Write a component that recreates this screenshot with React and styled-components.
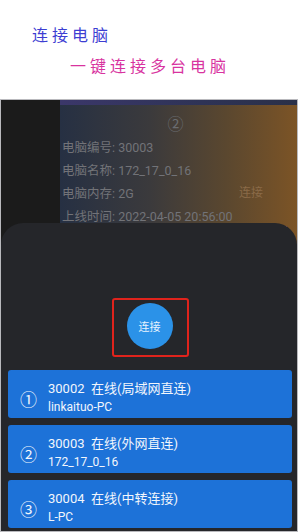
import React from "react";
import styled, { createGlobalStyle } from "styled-components";

const Global = createGlobalStyle`
  html, body { margin: 0; padding: 0; background: #ffffff; }
  body { font-family: Roboto, "Noto Sans CJK SC", sans-serif; }
  * { box-sizing: border-box; }
`;

const Page = styled.div`
  width: 300px;
  height: 532px;
  display: flex;
  flex-direction: column;
  overflow: hidden;
`;

const Header = styled.header`
  height: 99px;
  display: flex;
  flex-direction: column;
  padding-top: 23px;
`;

const Title = styled.div`
  font-family: "Noto Sans CJK SC", sans-serif;
  font-size: 16px;
  line-height: 22px;
  letter-spacing: 4px;
  color: ${(p) => p.$color};
  margin-left: ${(p) => p.$indent}px;
  margin-top: ${(p) => p.$top || 0}px;
`;

const Phone = styled.div`
  position: relative;
  width: 298px;
  height: 433px;
  border: 1px solid #b9b9bd;
  background: #1b1b1b;
  display: flex;
  overflow: hidden;
`;

const Sidebar = styled.div`
  width: 59px;
  background: #1b1b1b;
`;

const Card = styled.div`
  flex: 1;
  display: flex;
  flex-direction: column;
  background: linear-gradient(90deg, #263043 0%, #3b3a3c 38%, #5a472f 70%, #7c5426 100%);
`;

const Band = styled.div`
  height: 5px;
  background: linear-gradient(90deg, #3b376a 0%, #2e3356 60%, #2a3048 100%);
`;

const CardBody = styled.div`
  position: relative;
  padding: 7px 0 0 2px;
  color: #727378;
  font-size: 12.5px;
`;

const Circle = styled.div`
  font-family: "Noto Sans CJK SC", sans-serif;
  text-align: center;
  font-size: 16px;
  line-height: 22px;
  color: #6a6c70;
  padding-right: 8px;
  margin-bottom: 2px;
`;

const InfoRow = styled.div`
  height: 23px;
  line-height: 23px;
  display: flex;
  justify-content: space-between;
  padding-right: 34px;
`;

const InfoLink = styled.span`
  color: #8a6a48;
  font-size: 12px;
`;

const PinkLine = styled.div`
  position: absolute;
  right: 10px;
  bottom: 0px;
  width: 24px;
  height: 2px;
  background: #a86a8a;
`;

const Sheet = styled.div`
  position: absolute;
  left: 0;
  right: 0;
  bottom: 0;
  height: 308px;
  background: #25262a;
  border-radius: 22px 22px 0 0;
  display: flex;
  flex-direction: column;
  align-items: center;
  padding: 75px 5px 0 7px;
`;

const Highlight = styled.div`
  width: 77px;
  height: 59px;
  border: 2px solid #e0231c;
  border-radius: 3px;
  display: flex;
  justify-content: center;
  padding-top: 3px;
  padding-right: 1px;
`;

const ConnectButton = styled.button`
  width: 46px;
  height: 46px;
  border-radius: 50%;
  border: none;
  background: #2b92e8;
  color: #e8f2ff;
  font-family: "Noto Sans CJK SC", sans-serif;
  font-size: 11px;
  padding: 0;
`;

const List = styled.div`
  align-self: stretch;
  display: flex;
  flex-direction: column;
  gap: 7px;
  margin-top: 13px;
`;

const Item = styled.div`
  height: 48px;
  background: #1d72d8;
  border-radius: 3px;
  display: flex;
  align-items: center;
  padding: 8px 0 0 12px;
  color: #f2f6fc;
`;

const Num = styled.div`
  font-family: "Noto Sans CJK SC", sans-serif;
  font-size: 17px;
  width: 28px;
`;

const Texts = styled.div`
  display: flex;
  flex-direction: column;
`;

const Main = styled.div`
  font-size: 13px;
  line-height: 18px;
  white-space: pre;
`;

const Sub = styled.div`
  font-size: 12px;
  line-height: 18px;
`;

const items = [
  { n: "①", main: "30002  在线(局域网直连)", sub: "linkaituo-PC" },
  { n: "②", main: "30003  在线(外网直连)", sub: "172_17_0_16" },
  { n: "③", main: "30004  在线(中转连接)", sub: "L-PC" },
];

export default function App() {
  return (
    <Page>
      <Global />
      <Header>
        <Title $color="#3d3dd2" $indent={32}>连接电脑</Title>
        <Title $color="#d8339f" $indent={70} $top={9}>一键连接多台电脑</Title>
      </Header>
      <Phone>
        <Sidebar />
        <Card>
          <Band />
          <CardBody>
            <Circle>②</Circle>
            <InfoRow>电脑编号: 30003</InfoRow>
            <InfoRow>电脑名称: 172_17_0_16</InfoRow>
            <InfoRow>
              <span>电脑内存: 2G</span>
              <InfoLink>连接</InfoLink>
            </InfoRow>
            <InfoRow>上线时间: 2022-04-05 20:56:00</InfoRow>
            <PinkLine />
          </CardBody>
        </Card>
        <Sheet>
          <Highlight>
            <ConnectButton>连接</ConnectButton>
          </Highlight>
          <List>
            {items.map((it) => (
              <Item key={it.n}>
                <Num>{it.n}</Num>
                <Texts>
                  <Main>{it.main}</Main>
                  <Sub>{it.sub}</Sub>
                </Texts>
              </Item>
            ))}
          </List>
        </Sheet>
      </Phone>
    </Page>
  );
}
